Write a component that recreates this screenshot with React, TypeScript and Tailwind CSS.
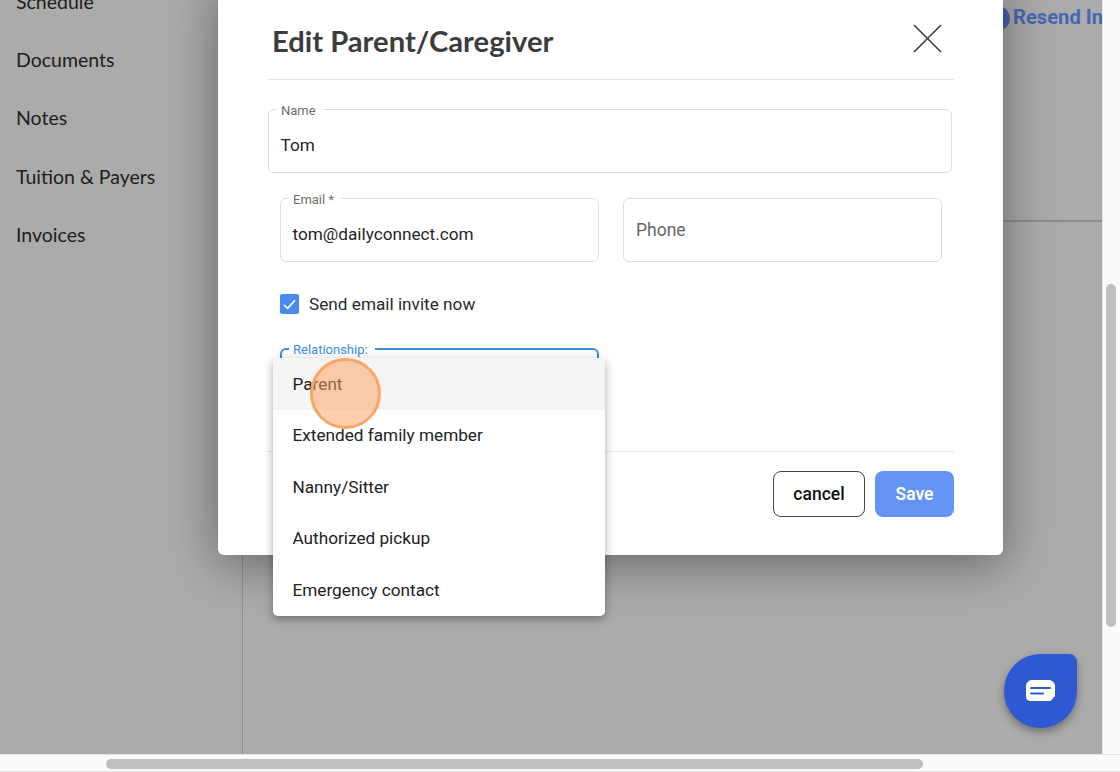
import React from "react"

const navItems = ["Documents", "Notes", "Tuition & Payers", "Invoices"]
const options = ["Extended family member", "Nanny/Sitter", "Authorized pickup", "Emergency contact"]

const Field: React.FC<{ label?: string; value?: string; placeholder?: string; className: string }> = ({
  label,
  value,
  placeholder,
  className,
}) => (
  <div className={`relative h-[64px] rounded-[6px] border border-[#dedede] px-[11.5px] flex items-center ${className}`}>
    {label && (
      <span className="absolute -top-[7px] left-[8px] bg-white pl-[4px] pr-[7px] text-[13px] leading-[16px] text-[#6e6e6e]">
        {label}
      </span>
    )}
    {value && <span className="pt-[10px] text-[17.2px] text-[#262626]">{value}</span>}
    {placeholder && <span className="pl-[0.5px] text-[17.5px] text-[#666666]">{placeholder}</span>}
  </div>
)

export default function App() {
  return (
    <div className="relative h-[772px] w-[1120px] overflow-hidden bg-[#fafafa] font-['Roboto',sans-serif]">
      <div className="flex h-[754px]">
        <div className="flex w-[1102px] bg-[#ababab]">
          {/* Sidebar */}
          <div className="w-[243px] shrink-0 border-r border-[#8f8f8f] pl-[16px] font-['Lato',sans-serif] text-[19.5px] text-[#1d1d1d]">
            <div className="-mt-[14px] leading-[32px]">Schedule</div>
            <div className="mt-[26px] flex flex-col gap-[26.3px]">
              {navItems.map((item) => (
                <div key={item} className="leading-[32px]">
                  {item}
                </div>
              ))}
            </div>
          </div>

          {/* Page behind the modal */}
          <div className="min-w-0 flex-1">
            <div className="flex h-[222px] overflow-hidden border-b-2 border-[#8c8c8c] pl-[742px] pt-[4px]">
              <span className="mt-[2px] h-[25px] w-[25px] shrink-0 rounded-full bg-[#4667b0]" />
              <span className="ml-[3px] whitespace-nowrap text-[20.2px] font-bold leading-[26px] text-[#4667b0]">
                Resend Invite
              </span>
            </div>
          </div>
        </div>

        {/* Vertical scrollbar */}
        <div className="w-[18px] border-l border-[#e4e4e4] pl-[3px] pt-[284px]">
          <div className="h-[343px] w-[10px] rounded-full bg-[#bfbfbf]" />
        </div>
      </div>

      {/* Horizontal scrollbar */}
      <div className="h-[18px] border-y border-[#e4e4e4] pl-[106px] pt-[4px]">
        <div className="h-[10px] w-[817px] rounded-full bg-[#bfbfbf]" />
      </div>

      {/* Modal */}
      <div className="absolute -top-[20px] left-[218px] h-[575px] w-[785px] rounded-[6px] bg-white px-[49px] shadow-[0_8px_50px_rgba(0,0,0,0.42)]">
        <div className="flex h-[100px] items-start justify-between border-b border-[#e6e6e6] pl-[5px] pr-[12px]">
          <h2 className="mt-[41px] font-['Lato',sans-serif] text-[29.2px] font-bold leading-[40px] text-[#3b3c40]">
            Edit Parent/Caregiver
          </h2>
          <svg className="mt-[44px]" width="29" height="29" viewBox="0 0 29 29" fill="none" stroke="#3a3a3a" strokeWidth="1.6">
            <path d="M1 1 L28 28 M28 1 L1 28" />
          </svg>
        </div>

        <Field label="Name" value="Tom" className="ml-px mt-[29px] w-[684px]" />

        <div className="ml-[13px] mt-[25px] flex gap-[24px]">
          <Field label="Email *" value="tom@dailyconnect.com" className="w-[319px]" />
          <Field placeholder="Phone" className="w-[319px]" />
        </div>

        <div className="ml-[13px] mt-[32px] flex items-center gap-[10px]">
          <span className="flex h-[20px] w-[19px] items-center justify-center rounded-[2px] bg-[#4b8af0]">
            <svg width="13" height="11" viewBox="0 0 13 11" fill="none" stroke="white" strokeWidth="1.7">
              <path d="M1 6 L4.6 9.4 L12 1.2" />
            </svg>
          </span>
          <span className="text-[17.2px] leading-[20px] text-[#2a2a2a]">Send email invite now</span>
        </div>

        {/* Select, open */}
        <div className="relative ml-[13px] mt-[34px] h-[64px] w-[319px] rounded-[6px] border-2 border-[#3a8fdc]">
          <span className="absolute -top-[8px] left-[7px] bg-white pl-[4px] pr-[7px] text-[13px] leading-[16px] text-[#3a8fdc]">
            Relationship:
          </span>
        </div>

        <div className="mt-[39px] border-t border-[#e6e6e6] pt-[19px]">
          <div className="flex justify-end gap-[10px]">
            <button
              type="button"
              className="h-[46px] w-[92px] rounded-[8px] border border-[#444444] text-[17.5px] font-medium text-[#111111]"
            >
              cancel
            </button>
            <button
              type="button"
              className="h-[46px] w-[79px] rounded-[8px] bg-[#6494f5] text-[17.5px] font-semibold text-white"
            >
              Save
            </button>
          </div>
        </div>
      </div>

      {/* Dropdown menu */}
      <div className="absolute left-[273px] top-[358px] w-[332px] rounded-[5px] bg-white shadow-[0_3px_10px_rgba(0,0,0,0.35)]">
        <div className="flex h-[52px] items-center rounded-t-[5px] bg-[#f4f4f4] px-[19.5px] pt-[1px] text-[17.2px] text-[#222222]">
          Parent
        </div>
        {options.map((option) => (
          <div key={option} className="flex h-[51.5px] items-center px-[19.5px] pt-[1px] text-[17.2px] text-[#222222]">
            {option}
          </div>
        ))}
      </div>

      {/* Click marker */}
      <div className="absolute left-[310px] top-[358px] h-[71px] w-[71px] rounded-full border-[3px] border-[#f5a765] bg-[#ff9f5c]/50" />

      {/* Chat button */}
      <div className="absolute left-[1004px] top-[654px] flex h-[74px] w-[73px] items-center justify-center rounded-[37px] rounded-tr-[8px] bg-[#2d5ad2] shadow-[0_4px_8px_rgba(0,0,0,0.35)]">
        <svg width="29" height="22" viewBox="0 0 29 22" fill="none">
          <path
            d="M6 0.5 H23 A5.5 5.5 0 0 1 28.5 6 V16 L24.5 20.5 H4 A3.5 3.5 0 0 1 0.5 17 V6 A5.5 5.5 0 0 1 6 0.5 Z"
            fill="white"
            stroke="white"
            strokeLinejoin="round"
          />
          <path d="M5 8 H24 M5 13.5 H17" stroke="#2d5ad2" strokeWidth="2" strokeLinecap="round" />
        </svg>
      </div>
    </div>
  )
}
